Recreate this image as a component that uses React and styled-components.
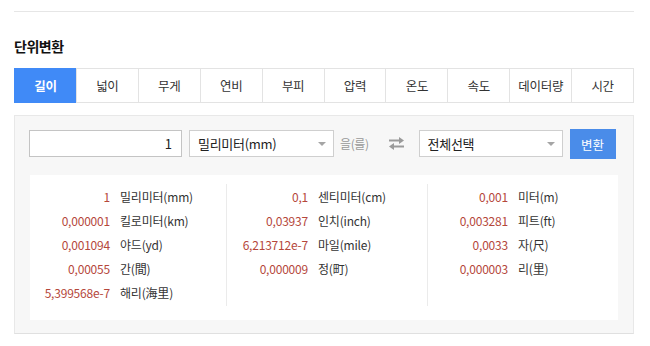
import React from 'react';
import styled, { createGlobalStyle } from 'styled-components';

const GlobalStyle = createGlobalStyle`
  html, body {
    margin: 0;
    padding: 0;
    background: #fff;
  }
  body {
    font-family: "Noto Sans CJK KR", "Noto Sans", sans-serif;
    color: #333;
  }
`;

const Wrapper = styled.div`
  width: 620px;
  margin-left: 14px;
  padding-top: 11px;
`;

const TopLine = styled.div`
  height: 1px;
  background: #e6e6e6;
`;

const Title = styled.h2`
  margin: 24px 0 0;
  font-size: 14px;
  line-height: 20px;
  font-weight: 700;
  color: #111;
  letter-spacing: -0.5px;
`;

const Tabs = styled.ul`
  display: flex;
  list-style: none;
  margin: 12px 0 0;
  padding: 0;
  border: 1px solid #e3e3e3;
  border-left: none;
`;

const Tab = styled.li`
  flex: 1;
  height: 33px;
  display: flex;
  align-items: center;
  justify-content: center;
  border-left: 1px solid #e3e3e3;
  font-size: 12.5px;
  letter-spacing: -0.3px;
  background: ${(p) => (p.$active ? '#408af7' : '#fff')};
  color: ${(p) => (p.$active ? '#fff' : '#333')};
  font-weight: ${(p) => (p.$active ? 700 : 400)};
  ${(p) => p.$active && 'margin: -1px 0; height: 35px; border-left-color: #408af7;'}
`;

const Panel = styled.div`
  margin-top: 12px;
  background: #f7f7f7;
  border: 1px solid #e8e8e8;
  border-bottom-color: #e0e0e0;
  padding: 13px 15px 13px 14px;
`;

const FormRow = styled.div`
  display: flex;
  align-items: flex-start;
  height: 30px;
  padding-top: 1px;
  white-space: nowrap;
  & > * {
    flex: none;
  }
`;

const NumberInput = styled.input`
  box-sizing: border-box;
  width: 153px;
  height: 27px;
  margin: 0;
  border: 1px solid #c4c4c4;
  background: #fff;
  text-align: right;
  padding: 0 9px;
  font-family: "Noto Sans CJK KR", sans-serif;
  font-size: 13px;
  color: #222;
  outline: none;
`;

const SelectBox = styled.div`
  box-sizing: border-box;
  width: ${(p) => p.$width}px;
  height: 27px;
  margin-left: ${(p) => p.$gap}px;
  border: 1px solid #cfcfcf;
  background: #fff;
  display: flex;
  align-items: center;
  justify-content: space-between;
  padding: 0 7px 0 8px;
  font-size: 13px;
  color: #222;
  letter-spacing: -0.3px;
`;

const Caret = styled.span`
  width: 0;
  height: 0;
  border-left: 4px solid transparent;
  border-right: 4px solid transparent;
  border-top: 4px solid #a5a5a5;
`;

const Particle = styled.span`
  margin-left: 6px;
  line-height: 27px;
  font-size: 12px;
  letter-spacing: -0.4px;
  color: #999;
`;

const SwapIcon = styled.svg`
  margin: 7px 0 0 19px;
`;

const ConvertButton = styled.button`
  margin-left: 7px;
  margin-top: -1px;
  width: 46px;
  height: 30px;
  border: none;
  background: #4a8ce9;
  color: #fff;
  font-family: "Noto Sans CJK KR", sans-serif;
  font-size: 12.5px;
  padding: 0;
`;

const Results = styled.div`
  margin-top: 15px;
  margin-left: 1px;
  background: #fff;
  display: grid;
  grid-template-columns: 196px 201px 1fr;
  padding: 9px 0 14px;
`;

const Column = styled.div`
  border-left: ${(p) => (p.$first ? 'none' : '1px solid #ebebeb')};
  min-height: 122px;
`;

const Row = styled.div`
  display: flex;
  align-items: center;
  height: 24px;
  font-size: 12px;
  letter-spacing: -0.2px;
  white-space: nowrap;
`;

const Value = styled.span`
  width: ${(p) => p.$w}px;
  flex: none;
  text-align: right;
  color: #b5473b;
`;

const Name = styled.span`
  margin-left: 10px;
  color: #333;
`;

const tabs = ['길이', '넓이', '무게', '연비', '부피', '압력', '온도', '속도', '데이터량', '시간'];

const columns = [
  [
    ['1', '밀리미터(mm)'],
    ['0,000001', '킬로미터(km)'],
    ['0,001094', '야드(yd)'],
    ['0,00055', '간(間)'],
    ['5,399568e-7', '해리(海里)'],
  ],
  [
    ['0,1', '센티미터(cm)'],
    ['0,03937', '인치(inch)'],
    ['6,213712e-7', '마일(mile)'],
    ['0,000009', '정(町)'],
  ],
  [
    ['0,001', '미터(m)'],
    ['0,003281', '피트(ft)'],
    ['0,0033', '자(尺)'],
    ['0,000003', '리(里)'],
  ],
];

const valueWidths = [80, 81, 80];

function App() {
  return (
    <>
      <GlobalStyle />
      <Wrapper>
        <TopLine />
        <Title>단위변환</Title>
        <Tabs>
          {tabs.map((t, i) => (
            <Tab key={t} $active={i === 0}>
              {t}
            </Tab>
          ))}
        </Tabs>
        <Panel>
          <FormRow>
            <NumberInput defaultValue="1" />
            <SelectBox $width={145} $gap={7}>
              <span>밀리미터(mm)</span>
              <Caret />
            </SelectBox>
            <Particle>을(를)</Particle>
            <SwapIcon width="17" height="13" viewBox="0 0 17 13">
              <g fill="none" stroke="#9a9a9a" strokeWidth="2">
                <path d="M1 3.5h13" />
                <path d="M16 9.5H3" />
              </g>
              <path d="M11 0l5 3.5-5 3.5z" fill="#9a9a9a" />
              <path d="M6 6L1 9.5 6 13z" fill="#9a9a9a" />
            </SwapIcon>
            <SelectBox $width={144} $gap={14}>
              <span>전체선택</span>
              <Caret />
            </SelectBox>
            <ConvertButton>변환</ConvertButton>
          </FormRow>
          <Results>
            {columns.map((col, ci) => (
              <Column key={ci} $first={ci === 0}>
                {col.map(([v, n]) => (
                  <Row key={n}>
                    <Value $w={valueWidths[ci]}>{v}</Value>
                    <Name>{n}</Name>
                  </Row>
                ))}
              </Column>
            ))}
          </Results>
        </Panel>
      </Wrapper>
    </>
  );
}

export default App;
